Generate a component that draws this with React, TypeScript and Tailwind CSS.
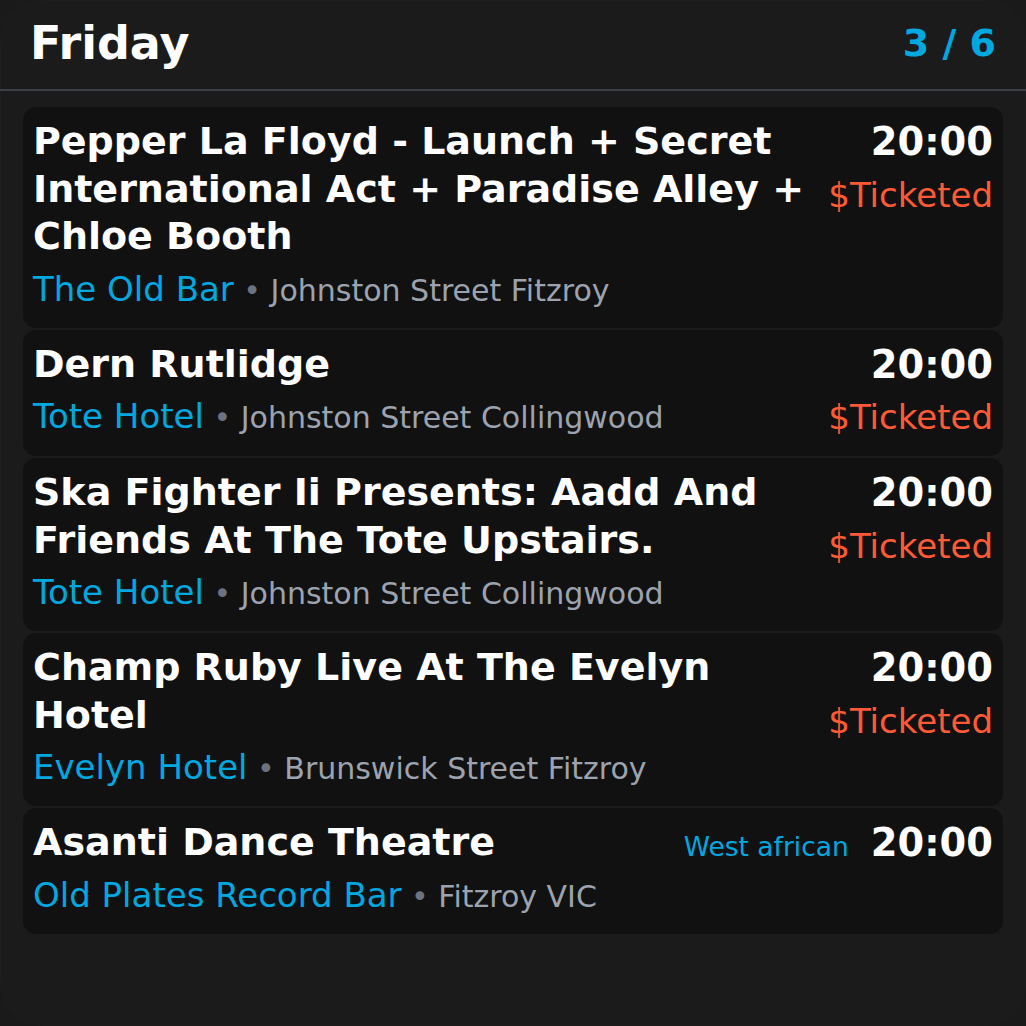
import React from "react";

type Ev = {
  title: string;
  venue: string;
  address: string;
  time: string;
  ticketed?: boolean;
  tag?: string;
};

const events: Ev[] = [
  {
    title: "Pepper La Floyd - Launch + Secret International Act + Paradise Alley + Chloe Booth",
    venue: "The Old Bar",
    address: "Johnston Street Fitzroy",
    time: "20:00",
    ticketed: true,
  },
  {
    title: "Dern Rutlidge",
    venue: "Tote Hotel",
    address: "Johnston Street Collingwood",
    time: "20:00",
    ticketed: true,
  },
  {
    title: "Ska Fighter Ii Presents: Aadd And Friends At The Tote Upstairs.",
    venue: "Tote Hotel",
    address: "Johnston Street Collingwood",
    time: "20:00",
    ticketed: true,
  },
  {
    title: "Champ Ruby Live At The Evelyn Hotel",
    venue: "Evelyn Hotel",
    address: "Brunswick Street Fitzroy",
    time: "20:00",
    ticketed: true,
  },
  {
    title: "Asanti Dance Theatre",
    venue: "Old Plates Record Bar",
    address: "Fitzroy VIC",
    time: "20:00",
    tag: "West african",
  },
];

function Card({ ev }: { ev: Ev }) {
  return (
    <div className="flex items-start gap-4 rounded-[13px] bg-[#111111] pl-[10px] pr-[10px] pt-[11px] pb-[17px]">
      <div className="flex min-w-0 flex-1 flex-col gap-[7px]">
        <div className="text-[38px] font-bold leading-[47.5px] text-white">{ev.title}</div>
        <div className="text-[34px] leading-[43px] text-[#9ca3af]">
          <span className="text-[#00a8e0]">{ev.venue}</span>
          <span className="text-[30px] leading-none text-[#6b7280]"> • </span>
          <span className="text-[30px] leading-none">{ev.address}</span>
        </div>
      </div>
      {ev.tag ? (
        <div className="flex shrink-0 items-baseline gap-[22px]">
          <span className="text-[26.5px] leading-[47.5px] text-[#00a8e0]">{ev.tag}</span>
          <span className="text-[38.4px] font-bold leading-[47.5px] text-white">{ev.time}</span>
        </div>
      ) : (
        <div className="flex shrink-0 flex-col items-end gap-[8px]">
          <span className="text-[38.4px] font-bold leading-[47.5px] text-white">{ev.time}</span>
          {ev.ticketed && (
            <span className="text-[34px] leading-[43px] text-[#ff5a36]">$Ticketed</span>
          )}
        </div>
      )}
    </div>
  );
}

export default function App() {
  return (
    <div
      className="h-[1026px] w-[1026px] overflow-hidden bg-[#1a1a1a]"
      style={{ fontFamily: '"DejaVu Sans", sans-serif' }}
    >
      <div className="flex h-full w-full flex-col rounded-[44px] bg-[#1b1b1b] shadow-[inset_0_0_0_1px_#1e1e1e]">
        <div className="flex h-[91px] items-center justify-between border-b-2 border-[#3a3f4a] px-[30px] pb-[2px]">
          <span className="text-[46px] font-bold text-white">Friday</span>
          <span className="text-[38px] font-bold text-[#00a8e0]">3 / 6</span>
        </div>
        <div className="flex flex-col gap-[2px] px-[23px] pt-[16px]">
          {events.map((ev, i) => (
            <Card key={i} ev={ev} />
          ))}
        </div>
      </div>
    </div>
  );
}
